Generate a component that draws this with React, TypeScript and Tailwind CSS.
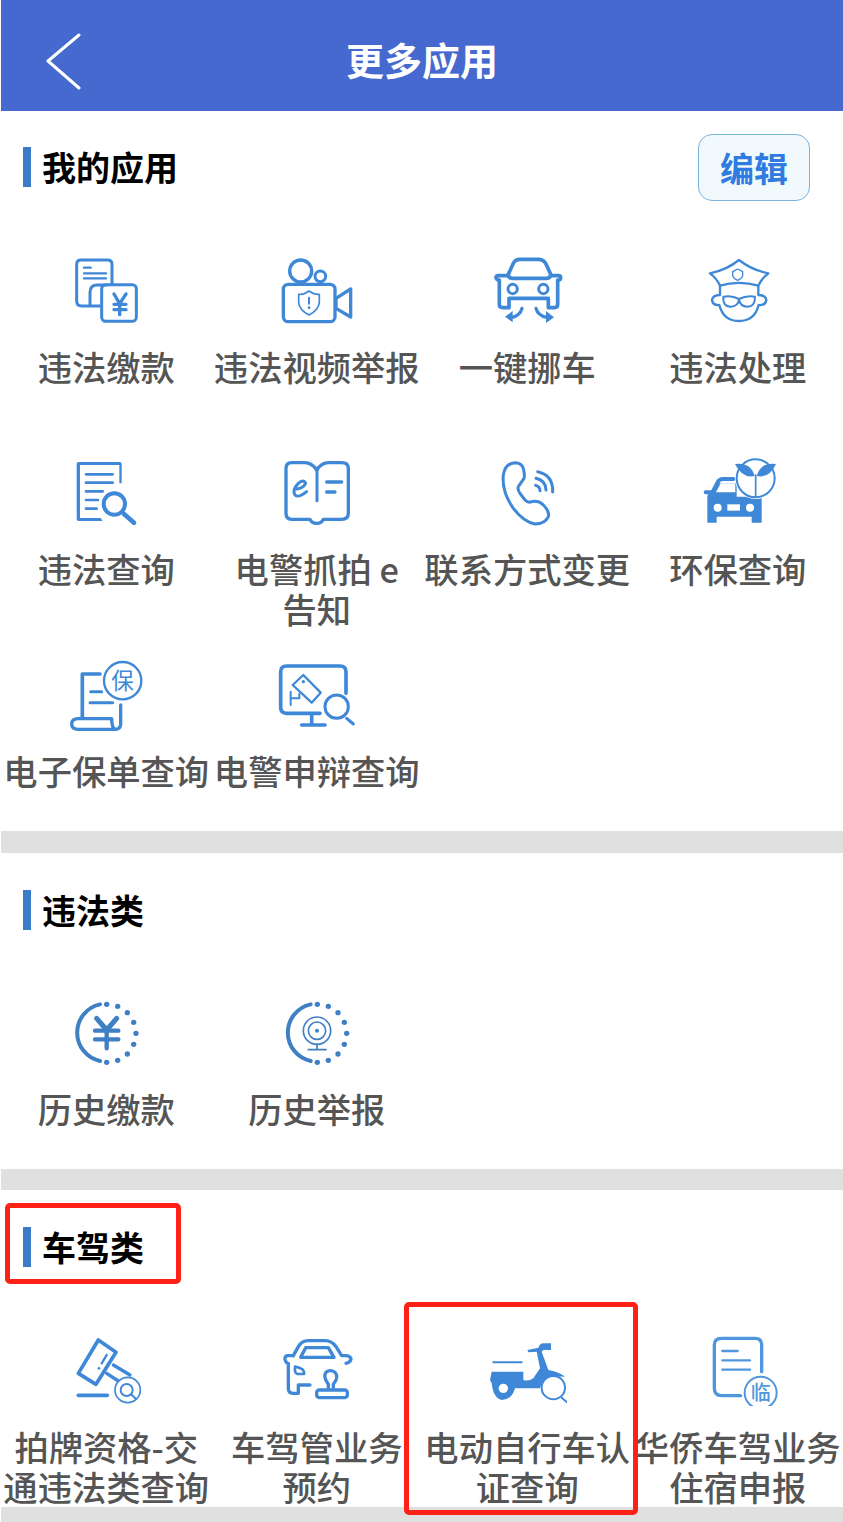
import type { ReactNode } from "react"

const BLUE = "#3f88d8"
const DEEP = "#3f7fc4"
const SOFT = "#4f96dc"

interface AppItem {
  lines: string[]
  box: string
  icon: ReactNode
}

function Line({ d, w = 9, c = BLUE }: { d: string; w?: number; c?: string }) {
  return <path d={d} fill="none" stroke={c} strokeWidth={w} strokeLinecap="round" strokeLinejoin="round" />
}

function Ring({ x, y, r, w = 9, c = BLUE, fill = "none" }: { x: number; y: number; r: number; w?: number; c?: string; fill?: string }) {
  return <circle cx={x} cy={y} r={r} fill={fill} stroke={c} strokeWidth={w} />
}

const dotSteps = [
  [0, -85], [33, -79], [62, -60], [81, -31], [88, 2], [81, 35], [62, 64], [33, 83], [0, 89],
]

function DottedArc({ x, y }: { x: number; y: number }) {
  return (
    <>
      <Line d={`M${x - 20} ${y - 85} A87 87 0 0 0 ${x - 20} ${y + 85}`} w={12} c={DEEP} />
      {dotSteps.map(([dx, dy]) => (
        <circle key={`${dx}-${dy}`} cx={x + dx} cy={y + dy} r={8} fill={DEEP} />
      ))}
    </>
  )
}

const myApps: AppItem[] = [
  {
    lines: ["违法缴款"],
    box: "78 30 240 216",
    icon: (
      <>
        <Line d="M184 183 H125 Q110 183 110 168 V58 Q110 45 123 45 H203 Q216 45 216 58 V118" />
        <Line d="M150 180 V142 Q150 120 172 120 H200" />
        <rect x={185} y={119} width={104} height={110} rx={12} fill="none" stroke={BLUE} strokeWidth={9} />
        <Line d="M132 68 H152 M132 85 H198 M132 100 H198" w={7} />
        <Line d="M222 147 L239 176 L258 147 M222 178 H258 M222 194 H258 M239 176 V209" w={10} />
      </>
    ),
  },
  {
    lines: ["违法视频举报"],
    box: "711 30 240 216",
    icon: (
      <>
        <Ring x={782} y={78} r={33} w={10} />
        <Ring x={841} y={94} r={16} />
        <rect x={730} y={118} width={155} height={112} rx={15} fill="none" stroke={BLUE} strokeWidth={10} />
        <Line d="M888 160 L932 132 V216 L888 190 Z" w={10} />
        <Line d="M807 138 Q790 150 776 148 V172 Q778 195 807 210 Q836 195 838 172 V148 Q824 150 807 138 Z" w={5} />
        <Line d="M807 158 V176" w={6} />
        <circle cx={807} cy={188} r={4} fill={BLUE} />
      </>
    ),
  },
  {
    lines: ["一键挪车"],
    box: "81 30 240 216",
    icon: (
      <>
        <Line d="M145 88 L160 55 Q165 43 180 43 H235 Q250 43 257 55 L272 88 Q272 100 260 100 H157 Q145 100 145 88 Z" w={11} />
        <Line d="M140 92 H115 Q108 92 108 98 Q110 105 118 105 V178 Q118 188 128 188 H147 V160 H265 V188 H283 Q293 188 293 178 V105 Q302 105 302 98 Q302 92 295 92 H275" w={11} />
        <Ring x={158} y={132} r={14} />
        <Ring x={250} y={132} r={14} />
        <Line d="M186 190 Q180 212 156 217" w={10} />
        <Line d="M228 190 Q234 212 260 217" w={10} />
        <polygon points="135,215 158,198 158,232" fill={BLUE} />
        <polygon points="282,217 258,198 258,234" fill={BLUE} />
      </>
    ),
  },
  {
    lines: ["违法处理"],
    box: "714 30 240 216",
    icon: (
      <>
        <Line d="M750 85 Q800 75 837 45 Q875 75 925 85 Q905 100 895 122 Q837 105 780 122 Q770 100 750 85 Z" w={7} />
        <Line d="M833 72 L848 80 V92 Q845 102 833 106 Q821 102 818 92 V80 Z" w={4} />
        <Line d="M780 125 V150 Q758 150 756 165 Q758 182 778 180 Q790 228 837 228 Q884 228 896 180 Q917 182 919 165 Q917 150 895 150 V125" w={7} />
        <Line d="M790 155 Q815 150 837 162 Q860 150 885 155 Q885 185 862 185 Q840 185 837 162 Q835 185 812 185 Q788 185 790 155 Z" w={6} />
      </>
    ),
  },
  {
    lines: ["违法查询"],
    box: "78 21 240 216",
    icon: (
      <>
        <path d="M116 36 H239 Q245 36 245 42 V100 H238 V45 H120 V204 H182 L188 213 H116 Q110 213 110 207 V42 Q110 36 116 36 Z" fill={BLUE} />
        <Line d="M138 73 H218 M138 98 H218 M138 124 H188 M138 150 H174 M138 176 H170" w={8} />
        <Ring x={223} y={162} r={32} w={12} />
        <Line d="M252 192 L282 218" w={14} />
      </>
    ),
  },
  {
    lines: ["电警抓拍 e", "告知"],
    box: "711 21 240 216",
    icon: (
      <>
        <Line d="M830 60 Q815 38 795 38 H755 Q738 38 738 55 V190 Q738 208 755 208 H810 Q815 220 830 220 Q845 220 850 208 H905 Q925 208 925 190 V55 Q925 38 905 38 H865 Q845 38 830 60 Z" w={10} />
        <Line d="M831 60 V152" w={9} />
        <Line d="M860 96 H905 M860 126 H885" w={10} />
        <Line d="M765 118 Q790 115 797 100 Q790 86 775 100 Q755 120 765 135 Q775 145 800 125" w={9} />
      </>
    ),
  },
  {
    lines: ["联系方式变更"],
    box: "81 21 240 216",
    icon: (
      <>
        <Line d="M165 38 Q185 38 190 55 Q195 75 192 85 L175 110 Q172 120 180 130 L195 150 Q205 160 215 155 Q235 150 250 165 Q270 185 265 200 Q255 222 225 222 Q190 215 160 175 Q125 125 130 75 Q135 40 165 38 Z" />
        <Line d="M233 65 Q280 75 278 126" />
        <Line d="M228 85 Q258 92 258 120" />
        <Line d="M227 106 Q240 110 240 122" />
      </>
    ),
  },
  {
    lines: ["环保查询"],
    box: "714 21 240 216",
    icon: (
      <>
        <Line d="M737 127 H757 L773 97 Q777 87 790 87 H820" w={12} />
        <path d="M757 127 L775 100 H830 V140 H905 V218 H875 V200 H770 V218 H742 V142 Q742 127 757 127 Z" fill={BLUE} />
        <path d="M782 100 H826 V127 H768 Z" fill="#fff" />
        <circle cx={773} cy={173} r={12} fill="#fff" />
        <circle cx={870} cy={173} r={12} fill="#fff" />
        <rect x={802} y={163} width={38} height={19} fill="#fff" />
        <circle cx={887} cy={85} r={62} fill="#fff" />
        <Ring x={887} y={85} r={57} w={6} />
        <path d="M825 42 Q872 36 884 78 Q846 86 825 42 Z" fill={BLUE} />
        <path d="M948 42 Q902 36 890 78 Q928 86 948 42 Z" fill={BLUE} />
        <Line d="M887 75 V140" w={5} />
      </>
    ),
  },
  {
    lines: ["电子保单查询"],
    box: "48 27 240 216",
    icon: (
      <>
        <Line d="M150 72 H97 V203" w={11} />
        <Line d="M212 165 V222 Q212 238 195 238" w={10} />
        <Line d="M185 206 H85 Q65 206 65 222 Q65 238 85 238 H195 Q185 232 185 206 Z" w={10} />
        <Ring x={218} y={92} r={56} w={7} />
        <Line d="M122 125 H155 M120 158 H188" w={9} />
        <text x={218} y={116} textAnchor="middle" fontSize={68} fill={BLUE}>保</text>
      </>
    ),
  },
  {
    lines: ["电警申辩查询"],
    box: "681 27 240 216",
    icon: (
      <>
        <Line d="M810 190 H710 Q692 190 692 172 V65 Q692 48 710 48 H870 Q888 48 888 65 V130" w={11} />
        <Line d="M785 195 V222 M755 225 H825" w={11} />
        <Line d="M760 75 L812 128 L785 158 L728 105 Z" w={7} />
        <Line d="M722 125 V165 M722 145 H748 V132" w={6} />
        <circle cx={760} cy={95} r={5} fill={BLUE} />
        <Ring x={860} y={170} r={35} />
        <Line d="M890 205 L910 222" />
      </>
    ),
  },
]

const violationApps: AppItem[] = [
  {
    lines: ["历史缴款"],
    box: "48 21 240 216",
    icon: (
      <>
        <DottedArc x={170} y={128} />
        <Line d="M140 85 L170 120 L200 85" w={15} c={DEEP} />
        <Line d="M135 122 H205 M135 148 H205 M170 120 V175" w={13} c={DEEP} />
      </>
    ),
  },
  {
    lines: ["历史举报"],
    box: "681 21 240 216",
    icon: (
      <>
        <DottedArc x={802} y={128} />
        <Ring x={801} y={122} r={41} w={5} c={DEEP} />
        <Ring x={801} y={122} r={26} w={5} c={DEEP} />
        <circle cx={801} cy={122} r={6} fill={DEEP} />
        <Line d="M801 163 V178 M775 179 H828" w={5} c={DEEP} />
      </>
    ),
  },
]

const licenseApps: AppItem[] = [
  {
    lines: ["拍牌资格-交", "通违法类查询"],
    box: "48 27 240 216",
    icon: (
      <>
        <Line d="M145 45 L198 82 L138 178 L85 145 Z" w={11} />
        <Line d="M170 90 L155 115" w={7} />
        <circle cx={147} cy={130} r={4} fill={BLUE} />
        <Line d="M190 120 L240 150 M170 145 L205 168" w={10} />
        <Line d="M85 211 H172" w={11} />
        <Ring x={233} y={195} r={38} w={5} fill="#fff" />
        <Ring x={230} y={195} r={18} w={6} />
        <Line d="M243 208 L258 222" w={6} />
      </>
    ),
  },
  {
    lines: ["车驾管业务", "预约"],
    box: "681 27 240 216",
    icon: (
      <>
        <Line d="M730 92 L745 65 Q755 47 775 47 H825 Q845 47 858 65 L875 92 H890 Q903 95 903 103 Q900 113 888 115" w={10} />
        <Line d="M752 97 L767 68 H835 L852 97 Z" w={10} />
        <Line d="M730 92 H715 Q703 92 705 103 Q708 115 715 115 V190 Q715 205 728 205 H745 V180 H780" w={10} />
        <Line d="M735 125 Q765 130 762 147 H742 Q733 145 735 125 Z" w={8} />
        <Line d="M835 190 V178 Q818 155 828 142 Q840 132 855 142 Q868 155 850 178 V190" w={10} />
        <rect x={800} y={195} width={92} height={23} rx={8} fill="none" stroke={BLUE} strokeWidth={10} />
      </>
    ),
  },
  {
    lines: ["电动自行车认", "证查询"],
    box: "51 27 240 216",
    icon: (
      <>
        <Line d="M70 112 H155" w={6} />
        <path d="M65 140 H160 V165 Q175 170 190 160 L210 130 L200 80 L175 82 L172 75 L205 68 Q210 55 220 55 H243 V75 H220 L215 80 L235 135 Q265 140 285 155 Q240 150 215 175 L210 190 H135 Q125 225 95 225 Q70 220 65 175 L60 165 Z" fill={BLUE} />
        <circle cx={100} cy={190} r={14} fill="#fff" />
        <Ring x={250} y={188} r={35} w={6} fill="#fff" />
        <Line d="M275 218 L297 237" w={6} />
      </>
    ),
  },
  {
    lines: ["华侨车驾业务", "住宿申报"],
    box: "684 27 240 216",
    icon: (
      <>
        <Line d="M875 140 V60 Q875 40 855 40 H755 Q733 40 733 60 V190 Q733 212 755 212 H812" w={10} c={SOFT} />
        <Line d="M757 78 H803 M757 106 H840 M757 134 H840" w={7} c={SOFT} />
        <Ring x={872} y={203} r={48} w={6} c={SOFT} />
        <text x={872} y={225} textAnchor="middle" fontSize={60} fontWeight={500} fill={SOFT}>临</text>
      </>
    ),
  },
]

function AppCell({ item, roomy }: { item: AppItem; roomy?: boolean }) {
  return (
    <div className="flex flex-col items-center pt-[18px]">
      <svg width={80} height={72} viewBox={item.box}>
        {item.icon}
      </svg>
      <div className={`${roomy ? "mt-[20px]" : "mt-[19px]"} text-center text-[34.3px] leading-[40px] font-medium whitespace-nowrap text-[#555]`}>
        {item.lines.map((line) => (
          <div key={line}>{line}</div>
        ))}
      </div>
    </div>
  )
}

function SectionTitle({ title, action }: { title: string; action?: string }) {
  return (
    <div className={`mb-[12px] flex h-[114px] items-center justify-between pr-[33px] pl-[22px] ${action ? "pb-[2px]" : ""}`}>
      <div className="flex items-center">
        <span className="h-[40px] w-[8px] bg-[#3a7cc8]" />
        <h2 className="ml-[11px] text-[34px] leading-[40px] font-semibold text-black">{title}</h2>
      </div>
      {action && (
        <button className="flex h-[67px] w-[112px] items-center justify-center rounded-[14px] border border-[#7ab3dc] bg-[#f2f9fd] text-[34px] font-semibold text-[#2f7be0]">
          {action}
        </button>
      )}
    </div>
  )
}

export default function App() {
  return (
    <div className="relative h-[1522px] w-[843px] overflow-hidden bg-white pl-px font-['Noto_Sans_CJK_SC','Noto_Sans',sans-serif]">
      <header className="relative flex h-[111px] items-center justify-center bg-[#4569ce] pt-[5px]">
        <svg className="absolute top-[33px] left-[45px]" width={36} height={58} viewBox="0 0 36 58">
          <path d="M33 2 L2 28 L33 55" fill="none" stroke="#fff" strokeWidth={3} strokeLinecap="round" strokeLinejoin="round" />
        </svg>
        <h1 className="text-[38px] font-semibold text-white">更多应用</h1>
      </header>

      <section>
        <SectionTitle title="我的应用" action="编辑" />
        <div className="grid grid-cols-4 grid-rows-[202px_202px_190px]">
          {myApps.map((item) => (
            <AppCell key={item.lines[0]} item={item} />
          ))}
        </div>
      </section>
      <div className="h-[22px] bg-[#e0e0e0]" />

      <section>
        <SectionTitle title="违法类" />
        <div className="grid h-[190px] grid-cols-4">
          {violationApps.map((item) => (
            <AppCell key={item.lines[0]} item={item} />
          ))}
        </div>
      </section>
      <div className="h-[21px] bg-[#e0e0e0]" />

      <section>
        <SectionTitle title="车驾类" />
        <div className="grid h-[191px] grid-cols-4">
          {licenseApps.map((item) => (
            <AppCell key={item.lines[0]} item={item} roomy />
          ))}
        </div>
      </section>
      <div className="h-[15px] bg-[#e0e0e0]" />

      <div className="absolute top-[1203px] left-[5px] h-[81px] w-[176px] rounded-[5px] border-[5px] border-[#ff2016]" />
      <div className="absolute top-[1302px] left-[404px] h-[213px] w-[234px] rounded-[5px] border-[5px] border-[#ff2016]" />
    </div>
  )
}
